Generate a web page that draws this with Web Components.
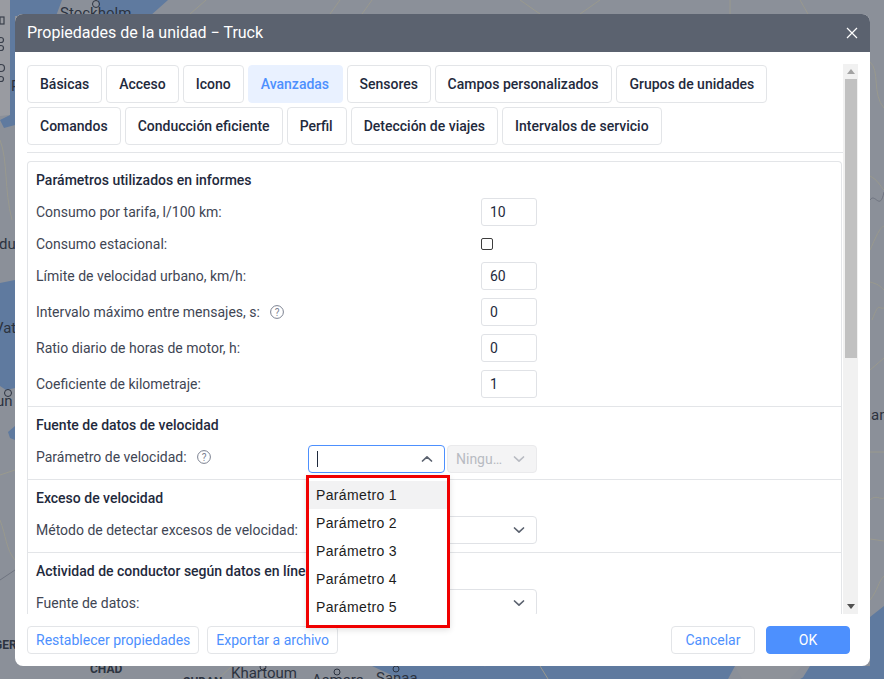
<!DOCTYPE html>
<html lang="es">
<head>
<meta charset="utf-8">
<title>Propiedades de la unidad</title>
<style>
	html, body { margin: 0; height: 100%; overflow: hidden; }
	body {
		background: #8b9099;
		font-family: Roboto, "Liberation Sans", sans-serif;
		padding: 14px 0 0 15px;
		box-sizing: border-box;
	}
</style>
</head>
<body>
<map-backdrop></map-backdrop>

<unit-dialog heading="Propiedades de la unidad − Truck">
	<tab-row>
		<prop-tab>Básicas</prop-tab>
		<prop-tab>Acceso</prop-tab>
		<prop-tab>Icono</prop-tab>
		<prop-tab active style="padding-right:13px">Avanzadas</prop-tab>
		<prop-tab style="padding-left:11.5px;padding-right:11.5px">Sensores</prop-tab>
		<prop-tab style="padding-right:13px">Campos personalizados</prop-tab>
		<prop-tab>Grupos de unidades</prop-tab>
		<prop-tab>Comandos</prop-tab>
		<prop-tab>Conducción eficiente</prop-tab>
		<prop-tab style="padding-right:13px">Perfil</prop-tab>
		<prop-tab>Detección de viajes</prop-tab>
		<prop-tab>Intervalos de servicio</prop-tab>
	</tab-row>

	<prop-panel>
		<prop-section heading="Parámetros utilizados en informes">
			<prop-row label="Consumo por tarifa, l/100 km:"><text-field value="10"></text-field></prop-row>
			<prop-row label="Consumo estacional:"><check-box></check-box></prop-row>
			<prop-row label="Límite de velocidad urbano, km/h:"><text-field value="60"></text-field></prop-row>
			<prop-row label="Intervalo máximo entre mensajes, s:" help><text-field value="0"></text-field></prop-row>
			<prop-row label="Ratio diario de horas de motor, h:"><text-field value="0"></text-field></prop-row>
			<prop-row label="Coeficiente de kilometraje:"><text-field value="1"></text-field></prop-row>
		</prop-section>
		<prop-section heading="Fuente de datos de velocidad" nudge>
			<prop-row label="Parámetro de velocidad:" help short raised>
				<select-box focused style="width:137px"></select-box>
				<select-box disabled value="Ningu…" style="width:90px;margin-left:2px"></select-box>
			</prop-row>
		</prop-section>
		<prop-section heading="Exceso de velocidad">
			<prop-row label="Método de detectar excesos de velocidad:" short>
				<select-box style="width:229px"></select-box>
			</prop-row>
		</prop-section>
		<prop-section heading="Actividad de conductor según datos en línea">
			<prop-row label="Fuente de datos:" short>
				<select-box style="width:229px"></select-box>
			</prop-row>
		</prop-section>
	</prop-panel>

	<dlg-button slot="footer-left">Restablecer propiedades</dlg-button>
	<dlg-button slot="footer-left">Exportar a archivo</dlg-button>
	<dlg-button slot="footer-right" fixed>Cancelar</dlg-button>
	<dlg-button slot="footer-right" fixed primary>OK</dlg-button>

	<param-menu slot="overlay">
		<menu-option hovered>Parámetro 1</menu-option>
		<menu-option>Parámetro 2</menu-option>
		<menu-option>Parámetro 3</menu-option>
		<menu-option>Parámetro 4</menu-option>
		<menu-option>Parámetro 5</menu-option>
	</param-menu>
</unit-dialog>

<script>
// Chevron shared by the select boxes
const chevron = (up) => `<svg width="12" height="8" viewBox="0 0 12 8" fill="none" stroke="currentColor" stroke-width="1.7" stroke-linecap="round" stroke-linejoin="round"><path d="${up ? 'M1.5 6 6 1.8 10.5 6' : 'M1.5 2 6 6.2 10.5 2'}"/></svg>`;

/** Greyed out world map lying behind the dialog. */
class MapBackdrop extends HTMLElement {
	constructor() {
		super();
		const shadow = this.attachShadow({ mode: 'open' });
		shadow.innerHTML = `
	<style>
	:host { position: absolute; inset: 0; display: block; }
	svg { display: block; }
	text { font-family: Roboto, "Liberation Sans", sans-serif; fill: #2c3340; font-size: 15px; }
	.bold { font-weight: 700; font-size: 12px; }
	</style>
	<svg width="884" height="679" viewBox="0 0 884 679">
		<rect width="884" height="679" fill="#8b9099"/>
		<!-- sea -->
		<g fill="#5f7a9f">
			<path d="M10 0H62L56 16H15V125L4 128 0 120 10 115Z"/>
			<path d="M98 0H168L150 16H100Z"/>
			<path d="M0 283 15 280V388L6 390 0 386Z"/>
			<path d="M8 432 15 426V440L10 438Z"/>
			<path d="M345 666H486L452 679H400L372 666Z"/>
			<path d="M800 679 826 666H870V617L884 606V679Z"/>
			<path d="M436 679 486 666H735L728 679Z"/>
			<path d="M802 679H884V666H810Z"/>
		</g>
		<!-- land in the sea -->
		<path d="M735 666H802L790 679H742Z" fill="#8e9299"/>
		<!-- borders -->
		<g fill="none" stroke="#99998e" stroke-width="1">
			<path d="M0 140C8 160 4 190 12 220"/>
			<path d="M206 0 190 14M340 0 330 14M372 0 362 14"/>
			<path d="M520 0 540 14M600 0 580 14M730 0V14M800 0 808 14"/>
			<path d="M870 62C880 70 872 95 884 108"/>
			<path d="M870 176C878 180 880 186 884 190"/>
			<path d="M870 250C878 232 880 228 884 226"/>
			<path d="M870 282C878 284 880 286 884 290M872 320C880 300 878 310 884 308M870 370 884 358"/>
			<path d="M870 452H884M870 500C876 494 880 500 884 498M870 539 884 541"/>
			<path d="M870 600C878 590 878 582 884 576"/>
			<path d="M0 475 15 470M0 520C6 535 6 550 15 560"/>
			<path d="M100 679 118 666M232 666 218 679M540 666 548 679"/>
		</g>
		<g fill="none" stroke="#6f7480" stroke-width="1">
			<path d="M870 200C875 192 880 212 884 192"/>
			<path d="M0 580 15 570"/>
		</g>
		<!-- map controls on the left edge -->
		<path d="M0 0H10V115L0 116Z" fill="#999ba1"/>
		<g fill="none" stroke="#3a404c" stroke-width="1.2">
			<rect x="0" y="17" width="4" height="7"/>
			<circle cx="1" cy="40" r="2.5"/><circle cx="1" cy="48" r="2.5"/>
			<circle cx="1" cy="68" r="3.5"/><circle cx="1" cy="79" r="2.5"/>
		</g>
		<!-- places -->
		<g fill="none" stroke="#2c3340" stroke-width="1">
			<circle cx="96" cy="4" r="3.5"/><circle cx="8" cy="393" r="3.5"/>
			<circle cx="263" cy="667" r="3"/><circle cx="337" cy="672" r="3"/><circle cx="396" cy="669" r="3"/>
		</g>
		<text x="60" y="18">Stockholm</text>
		<text x="11" y="91">P</text>
		<text x="-1" y="249">du</text>
		<text x="-6" y="333">Vat</text>
		<text x="-4" y="406">un</text>
		<text x="-6" y="649" class="bold">GER</text>
		<text x="90" y="673" class="bold">CHAD</text>
		<text x="183" y="686" class="bold">SUDAN</text>
		<text x="231" y="678">Khartoum</text>
		<text x="312" y="685">Asmara</text>
		<text x="376" y="683">Sanaa</text>
		<text x="871" y="420">an</text>
	</svg>`;
	}
}

/** The dialog: title bar, scrolling content with its bar, footer and an overlay slot. */
class UnitDialog extends HTMLElement {
	constructor() {
		super();
		const shadow = this.attachShadow({ mode: 'open' });
		shadow.innerHTML = `
	<style>
	:host {
		position: relative;
		display: flex;
		flex-direction: column;
		width: 855px;
		height: 652px;
		background: #fff;
		border-radius: 8px;
	}
	header {
		height: 38px;
		flex: none;
		box-sizing: border-box;
		background: #5b626f;
		border-radius: 8px 8px 0 0;
		color: #fff;
		font-size: 16px;
		display: flex;
		align-items: center;
		justify-content: space-between;
		padding: 0 12px;
	}
	.title { margin-bottom: 2px; }
	header svg { display: block; }
	.body { flex: 1; min-height: 0; display: flex; padding: 12px 12px 0; }
	.scroll { flex: 1; min-width: 0; overflow: hidden; padding-top: 1px; }
	.bar {
		flex: none;
		width: 15px;
		background: #f1f1f1;
		display: flex;
		flex-direction: column;
		align-items: center;
	}
	.arrow { flex: none; height: 15px; width: 100%; display: flex; align-items: center; justify-content: center; }
	.thumb { flex: none; width: 12px; height: 279px; background: #c1c1c1; }
	.fill { flex: 1; }
	footer {
		flex: none;
		height: 52px;
		box-sizing: border-box;
		padding: 12px 20px 12px 12px;
		display: flex;
		justify-content: space-between;
	}
	.group { display: flex; gap: 8px; }
	.group.right { gap: 11px; }
	.overlay { position: absolute; left: 291px; top: 461px; }
	</style>
	<header>
		<span class="title"></span>
		<svg width="12" height="12" viewBox="0 0 12 12" fill="none" stroke="#fff" stroke-width="1.2"><path d="M1 1 11 11M11 1 1 11"/></svg>
	</header>
	<div class="body">
		<div class="scroll"><slot></slot></div>
		<div class="bar">
			<div class="arrow"><svg width="8" height="5"><path d="M4 0 8 5H0Z" fill="#a3a3a3"/></svg></div>
			<div class="thumb"></div>
			<div class="fill"></div>
			<div class="arrow"><svg width="8" height="5"><path d="M0 0H8L4 5Z" fill="#505050"/></svg></div>
		</div>
	</div>
	<footer>
		<div class="group"><slot name="footer-left"></slot></div>
		<div class="group right"><slot name="footer-right"></slot></div>
	</footer>
	<div class="overlay"><slot name="overlay"></slot></div>`;
		shadow.querySelector('.title').textContent = this.getAttribute('heading');
	}
}

/** Wrapping row of tabs with the line under it. */
class TabRow extends HTMLElement {
	constructor() {
		super();
		const shadow = this.attachShadow({ mode: 'open' });
		shadow.innerHTML = `
	<style>
	:host {
		display: flex;
		flex-wrap: wrap;
		gap: 4px;
		padding-bottom: 7px;
		border-bottom: 1px solid #e3e5e8;
		margin-bottom: 8px;
	}
	</style>
	<slot></slot>`;
	}
}

class PropTab extends HTMLElement {
	constructor() {
		super();
		const shadow = this.attachShadow({ mode: 'open' });
		shadow.innerHTML = `
	<style>
	:host {
		display: flex;
		align-items: center;
		box-sizing: border-box;
		height: 38px;
		padding: 0 12px;
		border: 1px solid #e3e5e8;
		border-radius: 4px;
		font-size: 14px;
		font-weight: 500;
		color: #1f2a3d;
		white-space: nowrap;
	}
	:host([active]) {
		background: #e9f1ff;
		border-color: #e9f1ff;
		color: #4d90fe;
	}
	</style>
	<slot></slot>`;
	}
}

/** Bordered box that holds the sections. */
class PropPanel extends HTMLElement {
	constructor() {
		super();
		const shadow = this.attachShadow({ mode: 'open' });
		shadow.innerHTML = `
	<style>
	:host {
		display: block;
		border: 1px solid #e3e5e8;
		border-bottom: 0;
		border-radius: 4px 4px 0 0;
		margin-right: 1px;
	}
	</style>
	<slot></slot>`;
	}
}

class PropSection extends HTMLElement {
	constructor() {
		super();
		const shadow = this.attachShadow({ mode: 'open' });
		shadow.innerHTML = `
	<style>
	:host {
		display: flex;
		flex-direction: column;
		gap: 8px;
		padding: 8px;
		border-bottom: 1px solid #e3e5e8;
	}
	/* the focused select sits two pixels lower than the usual rhythm */
	:host([nudge]) { padding-bottom: 6px; gap: 10px; }
	h3 {
		margin: 0;
		font-size: 14px;
		line-height: 20px;
		font-weight: 500;
		color: #1f2a3d;
		white-space: nowrap;
	}
	</style>
	<h3></h3>
	<slot></slot>`;
		shadow.querySelector('h3').textContent = this.getAttribute('heading');
	}
}

/** Label on the left, controls on the right. */
class PropRow extends HTMLElement {
	constructor() {
		super();
		const shadow = this.attachShadow({ mode: 'open' });
		shadow.innerHTML = `
	<style>
	:host {
		display: flex;
		align-items: center;
		min-height: 20px;
		font-size: 14px;
		color: #3f4654;
	}
	.label { flex: none; width: 445px; display: flex; align-items: center; white-space: nowrap; }
	:host([short]) .label { width: 272px; }
	:host([raised]) .label { margin-bottom: 4px; }
	svg { margin-left: 10.5px; }
	text { font-family: Roboto, "Liberation Sans", sans-serif; font-size: 10px; fill: #7b8190; }
	</style>
	<div class="label"><span></span></div>
	<slot></slot>`;
		shadow.querySelector('span').textContent = this.getAttribute('label');
		if (this.hasAttribute('help')) {
			shadow.querySelector('.label').insertAdjacentHTML('beforeend',
				`<svg width="14" height="14" viewBox="0 0 14 14"><circle cx="7" cy="7" r="6.4" fill="none" stroke="#7b8190"/><text x="7" y="10.5" text-anchor="middle">?</text></svg>`);
		}
	}
}

class TextField extends HTMLElement {
	constructor() {
		super();
		const shadow = this.attachShadow({ mode: 'open' });
		shadow.innerHTML = `
	<style>
	:host {
		display: flex;
		align-items: center;
		box-sizing: border-box;
		width: 56px;
		height: 28px;
		padding: 0 8px;
		border: 1px solid #e0e2e6;
		border-radius: 3px;
		color: #1f2a3d;
	}
	</style>
	<span></span>`;
		shadow.querySelector('span').textContent = this.getAttribute('value');
	}
}

class CheckBox extends HTMLElement {
	constructor() {
		super();
		const shadow = this.attachShadow({ mode: 'open' });
		shadow.innerHTML = `
	<style>
	:host {
		display: block;
		box-sizing: border-box;
		width: 12px;
		height: 12px;
		border: 1px solid #3d3d3d;
		border-radius: 2px;
		background: #fff;
	}
	</style>`;
	}
}

class SelectBox extends HTMLElement {
	constructor() {
		super();
		const shadow = this.attachShadow({ mode: 'open' });
		const focused = this.hasAttribute('focused');
		shadow.innerHTML = `
	<style>
	:host {
		display: flex;
		align-items: center;
		justify-content: space-between;
		box-sizing: border-box;
		height: 28px;
		padding: 0 11px 0 8px;
		border: 1px solid #e0e2e6;
		border-radius: 4px;
		color: #5b626f;
		background: #fff;
	}
	:host([focused]) { border-color: #4d90fe; }
	:host([disabled]) { background: #f4f4f5; border-color: #eaeaec; color: #b8bbc2; }
	.caret { width: 1px; height: 16px; background: #1f2a3d; }
	svg { display: block; }
	</style>
	${focused ? '<div class="caret"></div>' : '<span class="value"></span>'}
	${chevron(focused)}`;
		const value = shadow.querySelector('.value');
		if (value) value.textContent = this.getAttribute('value') || '';
	}
}

class DlgButton extends HTMLElement {
	constructor() {
		super();
		const shadow = this.attachShadow({ mode: 'open' });
		shadow.innerHTML = `
	<style>
	:host {
		display: flex;
		align-items: center;
		justify-content: center;
		box-sizing: border-box;
		height: 28px;
		padding: 0 8px;
		border: 1px solid #e3e5e8;
		border-radius: 4px;
		font-size: 14px;
		color: #4d90fe;
		background: #fff;
		white-space: nowrap;
	}
	:host([fixed]) { width: 84px; }
	:host([primary]) { background: #4d90fe; border-color: #4d90fe; color: #fff; }
	</style>
	<slot></slot>`;
	}
}

/** Open list of the speed select, framed in red in the screenshot. */
class ParamMenu extends HTMLElement {
	constructor() {
		super();
		const shadow = this.attachShadow({ mode: 'open' });
		shadow.innerHTML = `
	<style>
	:host {
		display: block;
		box-sizing: border-box;
		width: 144px;
		height: 153px;
		border: 3px solid #f00000;
		padding: 3px 0 4px;
		background: #fff;
		font-family: "Liberation Sans", Arial, sans-serif;
		letter-spacing: .36px;
		box-shadow: 0 2px 6px rgba(0, 0, 0, .12);
	}
	</style>
	<slot></slot>`;
	}
}

class MenuOption extends HTMLElement {
	constructor() {
		super();
		const shadow = this.attachShadow({ mode: 'open' });
		shadow.innerHTML = `
	<style>
	:host {
		display: flex;
		align-items: center;
		height: 28px;
		padding-left: 7px;
		font-size: 14px;
		color: #1c1c1c;
		white-space: nowrap;
	}
	:host([hovered]) { background: #f2f2f3; }
	</style>
	<slot></slot>`;
	}
}

customElements.define('map-backdrop', MapBackdrop);
customElements.define('unit-dialog', UnitDialog);
customElements.define('tab-row', TabRow);
customElements.define('prop-tab', PropTab);
customElements.define('prop-panel', PropPanel);
customElements.define('prop-section', PropSection);
customElements.define('prop-row', PropRow);
customElements.define('text-field', TextField);
customElements.define('check-box', CheckBox);
customElements.define('select-box', SelectBox);
customElements.define('dlg-button', DlgButton);
customElements.define('param-menu', ParamMenu);
customElements.define('menu-option', MenuOption);
</script>
</body>
</html>
